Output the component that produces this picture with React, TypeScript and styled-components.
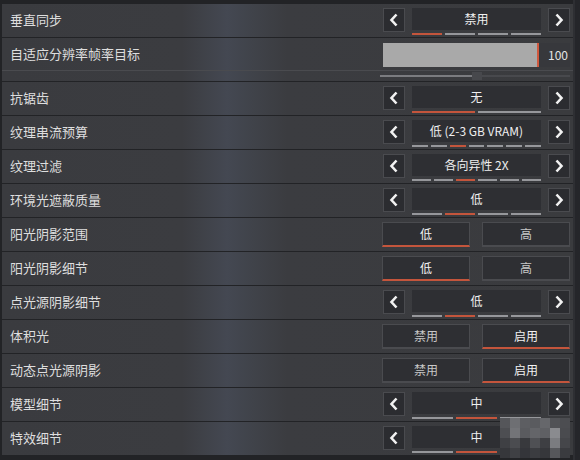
import { FC } from 'react';
import styled, { createGlobalStyle } from 'styled-components';

const GlobalStyle = createGlobalStyle`
  html, body {
    margin: 0;
    padding: 0;
    background: #25262a;
  }
  body {
    font-family: "Noto Sans CJK SC", "Noto Sans", "Liberation Sans", sans-serif;
    color: #dcdcdc;
  }
`;

type Selector = { kind: 'select'; value: string; count: number; active: number; hideRight?: boolean };
type Toggle = { kind: 'toggle'; options: [string, string]; active: number };
type Slider = { kind: 'slider'; value: number };

interface RowData {
  label: string;
  control: Selector | Toggle | Slider;
}

const rows: RowData[] = [
  { label: '垂直同步', control: { kind: 'select', value: '禁用', count: 4, active: 0 } },
  { label: '自适应分辨率帧率目标', control: { kind: 'slider', value: 100 } },
  { label: '抗锯齿', control: { kind: 'select', value: '无', count: 2, active: 0 } },
  { label: '纹理串流预算', control: { kind: 'select', value: '低 (2-3 GB VRAM)', count: 7, active: 2 } },
  { label: '纹理过滤', control: { kind: 'select', value: '各向异性 2X', count: 6, active: 2 } },
  { label: '环境光遮蔽质量', control: { kind: 'select', value: '低', count: 4, active: 1 } },
  { label: '阳光阴影范围', control: { kind: 'toggle', options: ['低', '高'], active: 0 } },
  { label: '阳光阴影细节', control: { kind: 'toggle', options: ['低', '高'], active: 0 } },
  { label: '点光源阴影细节', control: { kind: 'select', value: '低', count: 4, active: 1 } },
  { label: '体积光', control: { kind: 'toggle', options: ['禁用', '启用'], active: 1 } },
  { label: '动态点光源阴影', control: { kind: 'toggle', options: ['禁用', '启用'], active: 1 } },
  { label: '模型细节', control: { kind: 'select', value: '中', count: 3, active: 1 } },
  { label: '特效细节', control: { kind: 'select', value: '中', count: 3, active: 1, hideRight: true } },
];

const mosaic = [
  ['#55565a', '#6e6f73', '#5d5e62', '#5a5b5f', '#66676b', '#515256', '#4c4d51'],
  ['#4d4e52', '#737478', '#5a5b5f', '#646569', '#5f6064', '#8a8b8f', '#4a4b4f'],
  ['#3f4044', '#4b4c50', '#38393d', '#4f5054', '#3e3f43', '#7b7c80', '#45464a'],
  ['#36373b', '#3f4044', '#34353a', '#3b3c40', '#36373b', '#56575b', '#3a3b3f'],
];

const Chevron: FC<{ dir: 'left' | 'right' }> = ({ dir }) => (
  <svg width="10" height="14" viewBox="0 0 10 14">
    <path
      d={dir === 'left' ? 'M7.5 1.5 L2.5 7 L7.5 12.5' : 'M2.5 1.5 L7.5 7 L2.5 12.5'}
      fill="none"
      stroke="#f2f2f2"
      strokeWidth="2.6"
      strokeLinejoin="miter"
    />
  </svg>
);

const SelectControl: FC<{ c: Selector }> = ({ c }) => (
  <SelectStyled>
    <ArrowBox><Chevron dir="left" /></ArrowBox>
    <ValueColumn>
      <ValueBox>{c.value}</ValueBox>
      <Segments>
        {Array.from({ length: c.count }).map((_, i) => (
          <Segment key={i} $active={i === c.active} />
        ))}
      </Segments>
    </ValueColumn>
    <ArrowBox $hidden={c.hideRight}><Chevron dir="right" /></ArrowBox>
  </SelectStyled>
);

const ToggleControl: FC<{ c: Toggle }> = ({ c }) => (
  <ToggleStyled>
    {c.options.map((o, i) => (
      <ToggleButton key={o} $active={i === c.active}>{o}</ToggleButton>
    ))}
  </ToggleStyled>
);

const App: FC = () => (
  <>
    <GlobalStyle />
    <Panel>
      {rows.map((r) =>
        r.control.kind === 'slider' ? (
          <SliderRowStyled key={r.label}>
            <RowMain>
              <Label>{r.label}</Label>
              <SliderControl>
                <SliderBar />
                <SliderValue>{r.control.value}</SliderValue>
              </SliderControl>
            </RowMain>
            <SubRow>
              <Track>
                <TrackFill />
                <TrackThumb />
              </Track>
            </SubRow>
          </SliderRowStyled>
        ) : (
          <RowStyled key={r.label}>
            <Label>{r.label}</Label>
            {r.control.kind === 'select' ? (
              <SelectControl c={r.control} />
            ) : (
              <ToggleControl c={r.control} />
            )}
          </RowStyled>
        )
      )}
      <Mosaic>
        {mosaic.flat().map((col, i) => (
          <MosaicCell key={i} style={{ background: col }} />
        ))}
      </Mosaic>
    </Panel>
  </>
);

const rowBg = `linear-gradient(90deg, #3a3b3f 0px, #3b3c40 180px, #444852 225px, #40434a 250px, #3b3c40 285px, #3a3b3e 100%)`;

const Panel = styled.div`
  position: relative;
  display: flex;
  flex-direction: column;
  gap: 1px;
  width: 575px;
  height: 460px;
  box-sizing: border-box;
  padding: 4px 0 0 2px;
  background: #222326;
  border-right: 2px solid #2e2f33;
  overflow: hidden;
`;

const RowStyled = styled.div`
  display: flex;
  align-items: flex-start;
  justify-content: space-between;
  height: 33px;
  flex-shrink: 0;
  padding-right: 3px;
  background: ${rowBg};
`;

const SliderRowStyled = styled.div`
  display: flex;
  flex-direction: column;
  height: 43px;
  flex-shrink: 0;
  background: ${rowBg};
`;

const RowMain = styled.div`
  display: flex;
  align-items: flex-start;
  justify-content: space-between;
  height: 32px;
  padding-right: 3px;
  border-bottom: 1px solid #4a4b4f;
`;

const SubRow = styled.div`
  display: flex;
  align-items: center;
  justify-content: flex-end;
  height: 10px;
  padding-right: 3px;
`;

const Label = styled.div`
  padding-left: 8px;
  line-height: 31px;
  font-size: 13px;
  color: #dedede;
  white-space: nowrap;
`;

const SelectStyled = styled.div`
  display: grid;
  grid-template-columns: 22px 129px 22px;
  column-gap: 7px;
  margin-top: 4px;
`;

const ArrowBox = styled.div<{ $hidden?: boolean }>`
  display: flex;
  align-items: center;
  justify-content: center;
  height: 24px;
  box-sizing: border-box;
  background: #2b2c30;
  border: 1px solid #4a4b4f;
  visibility: ${(p) => (p.$hidden ? 'hidden' : 'visible')};
`;

const ValueColumn = styled.div`
  display: flex;
  flex-direction: column;
  gap: 3px;
`;

const ValueBox = styled.div`
  height: 22px;
  line-height: 22px;
  text-align: center;
  font-size: 12px;
  color: #f0f0f0;
  background: #2e2f33;
  white-space: nowrap;
`;

const Segments = styled.div`
  display: flex;
  gap: 3px;
`;

const Segment = styled.div<{ $active: boolean }>`
  flex: 1;
  height: 2px;
  background: ${(p) => (p.$active ? '#c4553c' : '#96979b')};
`;

const ToggleStyled = styled.div`
  display: grid;
  grid-template-columns: 88px 88px;
  column-gap: 12px;
  margin-top: 4px;
`;

const ToggleButton = styled.div<{ $active: boolean }>`
  height: 25px;
  box-sizing: border-box;
  line-height: 22px;
  text-align: center;
  font-size: 12px;
  color: ${(p) => (p.$active ? '#f2f2f2' : '#c8c8c8')};
  background: #2e2f33;
  border: 1px solid #4a4b4f;
  border-bottom: 2px solid ${(p) => (p.$active ? '#c4553c' : '#4a4b4f')};
`;

const SliderControl = styled.div`
  display: flex;
  align-items: center;
  margin-top: 5px;
`;

const SliderBar = styled.div`
  width: 154px;
  height: 24px;
  background: #a9a9a9;
  border-right: 2px solid #d0583e;
`;

const SliderValue = styled.div`
  width: 29px;
  height: 24px;
  line-height: 24px;
  text-align: right;
  font-size: 12px;
  color: #e4e4e4;
  background: #37383c;
  padding-right: 2px;
`;

const Track = styled.div`
  position: relative;
  display: flex;
  align-items: center;
  width: 190px;
  height: 10px;
  &::before {
    content: '';
    position: absolute;
    left: 0;
    right: 0;
    top: 4px;
    height: 2px;
    background: #48494d;
  }
`;

const TrackFill = styled.div`
  position: relative;
  width: 92px;
  height: 2px;
  background: #7b7c80;
`;

const TrackThumb = styled.div`
  position: relative;
  width: 10px;
  height: 8px;
  background: #47484c;
`;

const Mosaic = styled.div`
  position: absolute;
  left: 500px;
  top: 418px;
  display: grid;
  grid-template-columns: repeat(7, 10px);
  grid-auto-rows: 10px;
`;

const MosaicCell = styled.div``;

export default App;
